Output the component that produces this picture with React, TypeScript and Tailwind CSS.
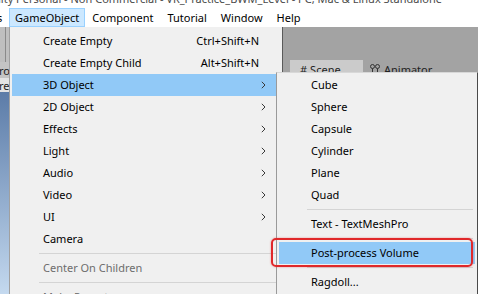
import React from 'react';

interface Item {
  label?: string;
  shortcut?: string;
  sub?: boolean;
  disabled?: boolean;
  active?: boolean;
  sep?: boolean;
}

const MAIN_ITEMS: Item[] = [
  { label: 'Create Empty', shortcut: 'Ctrl+Shift+N' },
  { label: 'Create Empty Child', shortcut: 'Alt+Shift+N' },
  { label: '3D Object', sub: true, active: true },
  { label: '2D Object', sub: true },
  { label: 'Effects', sub: true },
  { label: 'Light', sub: true },
  { label: 'Audio', sub: true },
  { label: 'Video', sub: true },
  { label: 'UI', sub: true },
  { label: 'Camera' },
  { sep: true },
  { label: 'Center On Children', disabled: true },
  { sep: true },
  { label: 'Make Parent', disabled: true },
];

const SUB_ITEMS: Item[] = [
  { label: 'Cube' },
  { label: 'Sphere' },
  { label: 'Capsule' },
  { label: 'Cylinder' },
  { label: 'Plane' },
  { label: 'Quad' },
  { sep: true },
  { label: 'Text - TextMeshPro' },
  { sep: true },
  { label: 'Post-process Volume', active: true },
  { sep: true },
  { label: 'Ragdoll...' },
];

const Chevron = () => (
  <svg width="5" height="8" viewBox="0 0 5 8" className="shrink-0">
    <path d="M0.8 0.8 L4 4 L0.8 7.2" fill="none" stroke="#3a3a3a" strokeWidth="1" />
  </svg>
);

const MenuRow = ({ item, indent, sepLeft }: { item: Item; indent: string; sepLeft: string }) => {
  if (item.sep) {
    return (
      <div className={`h-[7px] flex items-center ${sepLeft}`}>
        <div className="h-px w-full bg-[#d4d4d4]" />
      </div>
    );
  }
  return (
    <div
      className={`h-[22px] mx-[2px] pb-[1px] flex items-center ${indent} pr-[14px] ${
        item.active ? 'bg-[#91c9f7]' : ''
      } ${item.disabled ? 'text-[#6d6d6d]' : 'text-black'}`}
    >
      <span className="flex-1 whitespace-nowrap">{item.label}</span>
      {item.shortcut && <span className="whitespace-nowrap pr-[7px]">{item.shortcut}</span>}
      {item.sub && <Chevron />}
    </div>
  );
};

export default function App() {
  return (
    <div className="relative w-[478px] h-[294px] overflow-hidden bg-white font-['Segoe_UI','Noto_Sans',sans-serif] text-[11px] leading-none">
      {/* Title bar (cut off) */}
      <div className="h-[8px] overflow-hidden text-[#4a4a4a] whitespace-nowrap">
        <div className="-mt-[8px] -ml-[14px] leading-[14px]">
          Unity Personal - Non Commercial - VR_Practice_BWM_Level - PC, Mac &amp; Linux Standalone
        </div>
      </div>

      {/* Menu bar */}
      <div className="h-[19px] flex items-center whitespace-nowrap">
        <span className="w-[9px] overflow-hidden">
          <span className="block -ml-[3px]">s</span>
        </span>
        <span className="h-[19px] px-[5px] flex items-center bg-[#cce8ff] border border-[#99d1ff]">GameObject</span>
        <span className="px-[7px]">Component</span>
        <span className="px-[7px]">Tutorial</span>
        <span className="px-[7px]">Window</span>
        <span className="px-[7px]">Help</span>
      </div>

      {/* Editor behind */}
      <div className="flex h-[267px]">
        <div className="w-[9px] flex flex-col overflow-hidden">
          <div className="h-[35px] bg-[#bfbfbf] flex">
            <div className="w-[6px] border-r border-[#8a8a8a]" />
          </div>
          <div className="h-[16px] bg-[#c4c4c4] flex items-center -ml-[1px] text-[#222]">ro</div>
          <div className="h-[14px] bg-[#e4e4e4] flex items-center -ml-[1px] text-[#222]">re</div>
          <div className="flex-1 bg-gradient-to-b from-[#5c7ca8] to-[#c4d9ef]" />
        </div>
        <div className="w-[272px] bg-[#c8c8c8]" />
        <div className="flex-1 bg-[#a3a3a3] flex flex-col">
          <div className="h-[33px]" />
          <div className="flex items-start pl-[9px] gap-[7px] text-[#222]">
            <div className="h-[16px] w-[73px] bg-[#cbcbcb] flex items-start pt-[4px] pl-[10px] gap-[3px]">
              <span>#</span>
              <span>Scene</span>
            </div>
            <div className="flex items-start pt-[4px] gap-[4px]">
              <svg width="10" height="9" viewBox="0 0 10 9">
                <circle cx="2.5" cy="2.5" r="2" fill="none" stroke="#333" strokeWidth="1" />
                <circle cx="7.5" cy="2.5" r="2" fill="none" stroke="#333" strokeWidth="1" />
                <path d="M2.5 4.5 V8 M7.5 4.5 V8" stroke="#333" strokeWidth="1" />
              </svg>
              <span>Animator</span>
            </div>
          </div>
        </div>
      </div>

      {/* GameObject dropdown */}
      <div className="absolute left-[9px] top-[27px] w-[274px] h-[290px] bg-[#f0f0f0] border-l border-[#a0a0a0] border-r border-r-[#5a5a5a] pt-[3px]">
        {MAIN_ITEMS.map((it, i) => (
          <MenuRow key={i} item={it} indent="pl-[31px]" sepLeft="pl-[29px] pr-[2px]" />
        ))}
      </div>

      {/* 3D Object submenu */}
      <div className="absolute left-[276px] top-[72px] w-[202px] h-[240px] bg-[#f0f0f0] border-l border-[#9a9a9a] border-t border-t-[#d8d8d8] border-r border-r-[#4a4a4a] pt-[1px]">
        {SUB_ITEMS.map((it, i) => (
          <MenuRow key={i} item={it} indent="pl-[32px]" sepLeft="pl-[30px] pr-[4px]" />
        ))}
      </div>

      {/* Red annotation box */}
      <div className="absolute left-[271px] top-[238px] w-[202px] h-[29px] rounded-[5px] border-2 border-[#e0282a] shadow-[0_0_2px_rgba(224,40,42,0.5)]" />
    </div>
  );
}
